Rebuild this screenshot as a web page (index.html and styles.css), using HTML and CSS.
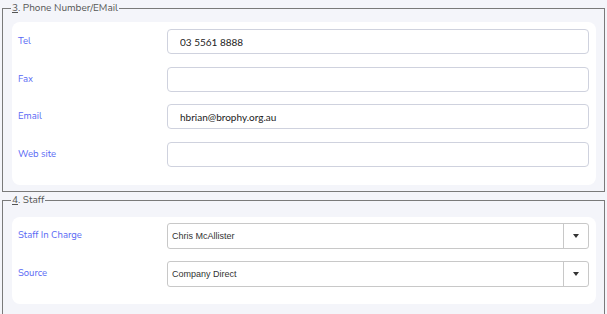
FILE: index.html
```html
<!DOCTYPE html>
<html>
<head>
<title>Contact Details</title>
<meta name="viewport" content="width=device-width, initial-scale=1.0">
<link rel="stylesheet" href="styles.css">
</head>
<body>

<form class="details">
    <fieldset class="section section-phone">
        <legend><u>3</u>. Phone Number/EMail</legend>
        <div class="card">
            <div class="row">
                <label for="tel">Tel</label>
                <input id="tel" type="text" value="03 5561 8888">
            </div>
            <div class="row">
                <label for="fax">Fax</label>
                <input id="fax" type="text" value="">
            </div>
            <div class="row">
                <label for="email">Email</label>
                <input id="email" type="text" value="hbrian@brophy.org.au">
            </div>
            <div class="row">
                <label for="web">Web site</label>
                <input id="web" type="text" value="">
            </div>
        </div>
    </fieldset>

    <fieldset class="section section-staff">
        <legend><u>4</u>. Staff</legend>
        <div class="card card-staff">
            <div class="row row-select">
                <label for="staff">Staff In Charge</label>
                <div class="select">
                    <select id="staff">
                        <option>Chris McAllister</option>
                    </select>
                    <span class="arrow"></span>
                </div>
            </div>
            <div class="row row-select">
                <label for="source">Source</label>
                <div class="select">
                    <select id="source">
                        <option>Company Direct</option>
                    </select>
                    <span class="arrow"></span>
                </div>
            </div>
        </div>
    </fieldset>
</form>

</body>
</html>
```

FILE: styles.css
```css
body {
    margin: 0;
    padding: 0 2px;
    background-color: #f4f5fa;
    font-family: 'Nunito', 'Lato', sans-serif;
    color: #333;
}
.section {
    margin: 0;
    border: 1px solid #7a7a7a;
    padding: 6px 8px 6px 9px;
}
.section legend {
    padding: 0 1px;
    margin-left: -1px;
    font-size: 10px;
    line-height: 16px;
    color: #555;
}
.section-staff {
    padding-top: 9px;
    padding-bottom: 20px;
}
.card {
    background: #ffffff;
    border-radius: 8px;
    padding: 7px 7px 6px 6px;
}
.card-staff {
    padding: 6px 7px 5px 6px;
}
.row {
    display: flex;
    height: 37.5px;
    align-items: flex-start;
}
.row label {
    width: 149px;
    font-size: 9.5px;
    color: #5868f4;
    line-height: 25px;
    margin-top: -1px;
}
.row input {
    flex: 1;
    height: 25px;
    box-sizing: border-box;
    border: 1px solid #cfd2de;
    border-radius: 4px;
    padding: 0 12px;
    font-family: 'Lato', sans-serif;
    font-size: 10px;
    color: #222;
    background: #fff;
}
.row-select {
    height: 38px;
}
.select {
    flex: 1;
    display: flex;
    height: 26px;
    box-sizing: border-box;
    border: 1px solid #c8c8c8;
    border-radius: 3px;
    background: #fff;
}
.select select {
    flex: 1;
    appearance: none;
    border: none;
    background: transparent;
    padding: 0 4px;
    font-family: 'Liberation Sans', Arial, sans-serif;
    font-size: 9px;
    color: #333;
    outline: none;
}
.arrow {
    width: 24px;
    border-left: 1px solid #c8c8c8;
    display: flex;
    align-items: center;
    justify-content: center;
}
.arrow::after {
    content: "";
    border-left: 3px solid transparent;
    border-right: 3px solid transparent;
    border-top: 4px solid #333;
}
```
